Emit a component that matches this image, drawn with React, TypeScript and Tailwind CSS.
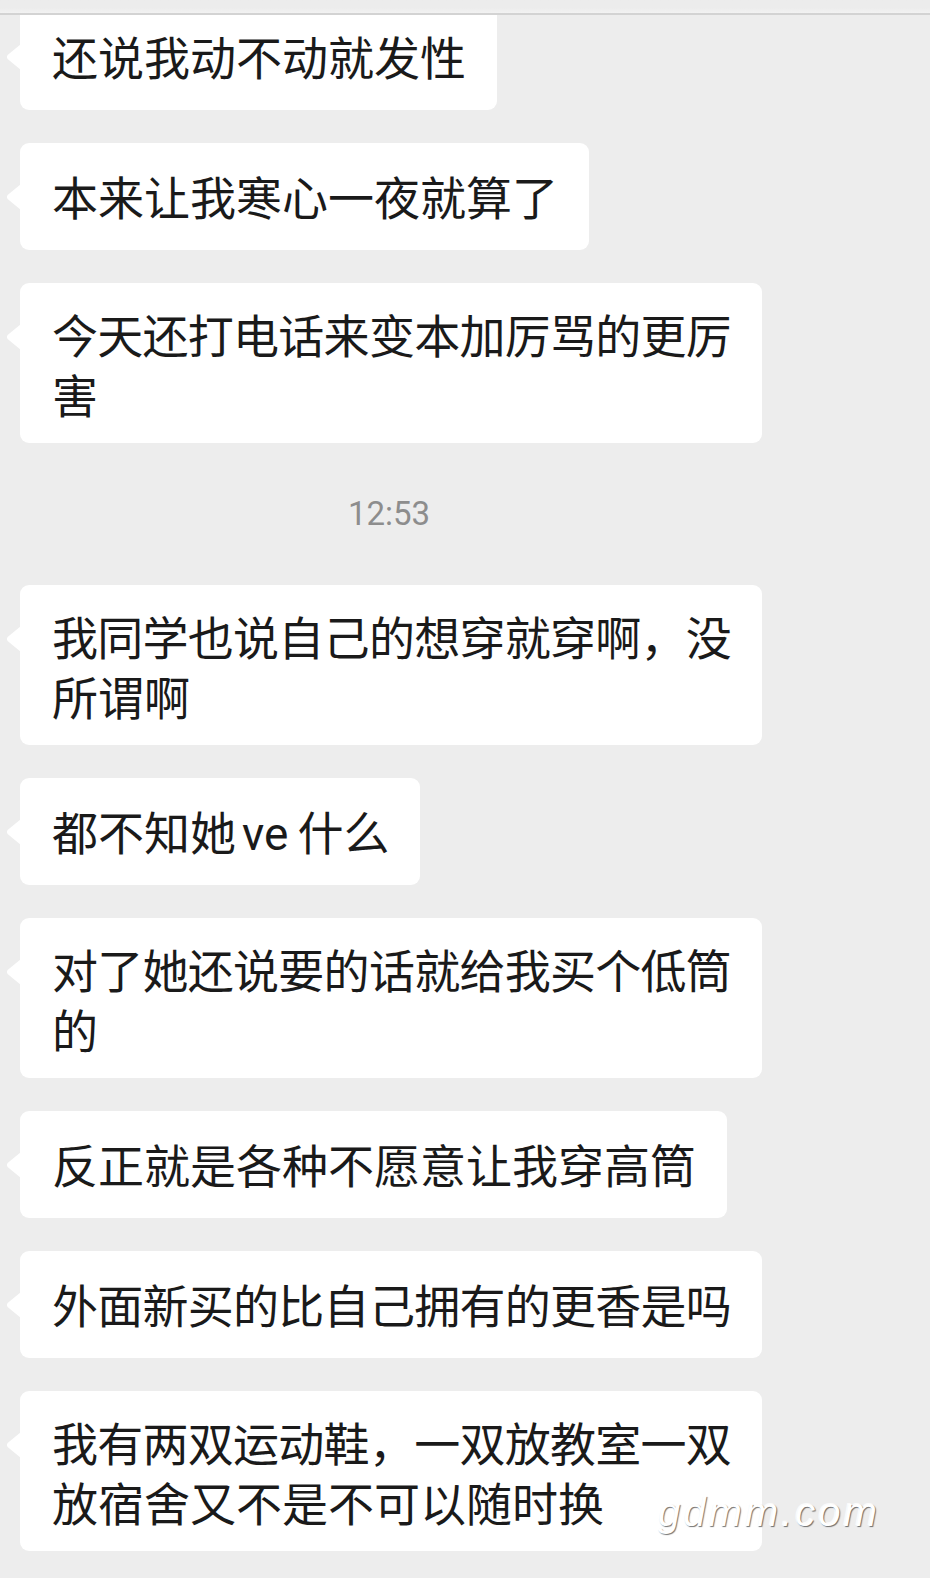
import React from "react";

type Msg = { lines: React.ReactNode[]; tight?: boolean[] };

const BEFORE: Msg[] = [
  { lines: ["还说我动不动就发性"] },
  { lines: ["本来让我寒心一夜就算了"] },
  { lines: ["今天还打电话来变本加厉骂的更厉", "害"], tight: [true] },
];

const AFTER: Msg[] = [
  { lines: ["我同学也说自己的想穿就穿啊，没", "所谓啊"], tight: [true] },
  {
    lines: [
      <>
        都不知她<span className="ml-[6px] mr-[9px]">ve</span>什么
      </>,
    ],
  },
  { lines: ["对了她还说要的话就给我买个低筒", "的"], tight: [true] },
  { lines: ["反正就是各种不愿意让我穿高筒"] },
  { lines: ["外面新买的比自己拥有的更香是吗"], tight: [true] },
  { lines: ["我有两双运动鞋，一双放教室一双", "放宿舍又不是不可以随时换"], tight: [true] },
];

function Bubble({ msg }: { msg: Msg }) {
  const multi = msg.lines.length > 1;
  return (
    <div
      className={
        multi
          ? "relative flex min-h-[107px] items-center rounded-[9px] bg-white pt-[24px] pb-[16px] pl-[32px] pr-[31px]"
          : "relative flex min-h-[107px] items-center rounded-[9px] bg-white pt-[22px] pb-[18px] pl-[32px] pr-[31px]"
      }
    >
      {/* tail */}
      <svg className="absolute left-[-14px] top-[41px]" width="15" height="26" viewBox="0 0 15 26">
        <path d="M15 0 L1.6 11 Q0 13 1.6 15 L15 26 Z" fill="#ffffff" />
      </svg>
      <div className="text-[46px] leading-[60px] text-[#1a1a1a]">
        {msg.lines.map((line, i) => (
          <div
            key={i}
            className={msg.tight?.[i] ? "whitespace-nowrap tracking-[-0.73px]" : "whitespace-nowrap"}
          >
            {line}
          </div>
        ))}
      </div>
    </div>
  );
}

export default function App() {
  return (
    <div
      className="relative min-h-[1578px] w-[930px] overflow-hidden bg-[#ededed]"
      style={{ fontFamily: 'Roboto, "Noto Sans CJK SC", sans-serif' }}
    >
      <div className="flex flex-col items-start gap-[33px] pt-[3px] pl-[20px]">
        {BEFORE.map((m, i) => (
          <Bubble key={"b" + i} msg={m} />
        ))}
        <div className="flex h-[76px] w-[738px] items-center justify-center text-[33px] text-[#8d8d8d]">
          12:53
        </div>
        {AFTER.map((m, i) => (
          <Bubble key={"a" + i} msg={m} />
        ))}
      </div>

      {/* top edge of the title bar */}
      <div className="absolute left-0 right-0 top-0 h-[15px] border-b-2 border-[#d3d3d3] bg-gradient-to-b from-[#ececec] from-60% to-[#f2f2f2]" />

      {/* watermark */}
      <div
        className="absolute left-[658px] top-[1492px] text-[40px] italic leading-none tracking-[3px] text-white [text-shadow:1px_1px_1px_rgba(0,0,0,0.55),-1px_-1px_0_rgba(255,255,255,0.8)]"
        style={{ fontFamily: '"Liberation Sans", sans-serif' }}
      >
        gdmm.com
      </div>
    </div>
  );
}
